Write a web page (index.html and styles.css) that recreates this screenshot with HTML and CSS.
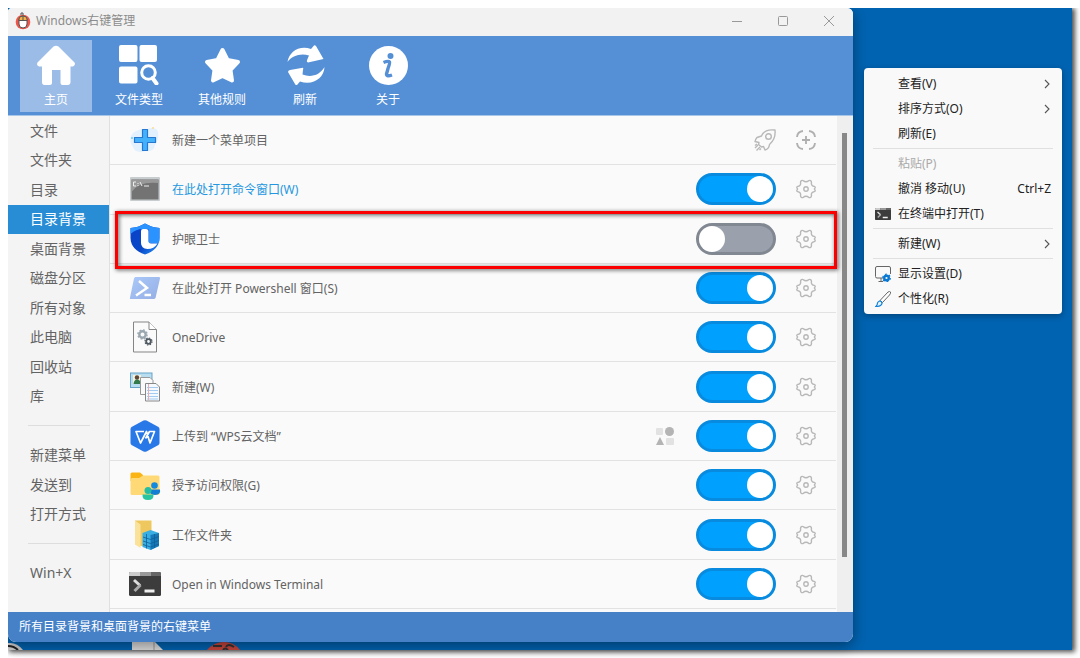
FILE: index.html
```html
<!DOCTYPE html>
<html lang="zh-CN">
<head>
    <meta charset="UTF-8" />
    <meta name="viewport" content="width=device-width, initial-scale=1.0"/>
    <title>Windows右键管理</title>
    <link rel="stylesheet" href="styles.css">
</head>
<body>
    <!-- shared icons -->
    <svg class="defs" aria-hidden="true">
        <symbol id="gear" viewBox="0 0 20 20">
            <path d="M10 2.8Q11.6 2.8 12.6 1.8Q13.4 1 14.6 1.7Q15.7 2.4 15.4 3.8Q15.2 5.7 16.2 6.4Q16.8 7 18 7.3Q19.6 7.8 19 9L18.4 10L19 11Q19.6 12.2 18 12.7Q16.800 13 16.200 13.600Q15.200 14.300 15.400 16.200Q15.700 17.600 14.600 18.300Q13.400 19 12.600 18.200Q11.600 17.200 10 17.200Q8.400 17.200 7.400 18.200Q6.600 19 5.400 18.300Q4.300 17.600 4.600 16.200Q4.800 14.300 3.800 13.600Q3.200 13 2 12.700Q.4 12.200 1 11L1.600 10L1 9Q.4 7.800 2 7.300Q3.200 7 3.800 6.400Q4.800 5.700 4.600 3.800Q4.300 2.400 5.400 1.700Q6.600 1 7.400 1.800Q8.400 2.800 10 2.800Z" fill="none" stroke="#b8b8b8" stroke-width="1.400"/>
            <circle cx="10" cy="10" r="2.200" fill="none" stroke="#b8b8b8" stroke-width="1.400"/>
        </symbol>
        <symbol id="terminal" viewBox="0 0 32 24">
            <rect width="32" height="24" rx="1.500" fill="#3c3c3c"/>
            <path d="M0 4V1.500Q0 0 1.500 0H11V4Z" fill="#ccc"/>
            <path d="M11 0H22V4H11Z" fill="#999"/>
            <path d="M22 0H30.500Q32 0 32 1.500V4H22Z" fill="#666"/>
            <path d="M5 8L11 13.500" stroke="#ddd" stroke-width="3"/>
            <path d="M11.500 13L5.500 19" stroke="#aaa" stroke-width="3"/>
            <path d="M15.500 17.500H25.500V20.500H15.500Z" fill="#eee"/>
        </symbol>
        <symbol id="chevron" viewBox="0 0 8 10">
            <path d="M2 1L6 5L2 9" fill="none" stroke="#555" stroke-width="1.100"/>
        </symbol>
    </svg>

    <div class="desktop">
        <!-- desktop icons peeking out under the window -->
        <svg class="desk-icons" viewBox="0 0 240 8" aria-hidden="true">
            <path d="M0 1Q9 0 15 8H0Z" fill="#ccc"/>
            <path d="M0 4Q6 4 10 8" fill="none" stroke="#222" stroke-width="2"/>
            <path d="M124 0H147L155 8H124Z" fill="#ddd"/>
            <path d="M146 0V8" stroke="#999"/>
            <path d="M199 8Q206 0 216 0Q226 0 232 8Z" fill="#c9453c"/>
            <path d="M205 4H214M218 5Q220 1 226 5M215 8Q217 5 220 8" fill="none" stroke="#333" stroke-width="2"/>
        </svg>

        <main class="window">
            <header class="titlebar">
                <svg width="16" height="18" viewBox="0 0 16 18">
                    <circle cx="8" cy="10" r="7.300" fill="#ef5548"/>
                    <rect x="4" y="4" width="8" height="12" rx="4" fill="#fff" stroke="#555"/>
                    <path d="M4 8.500V7Q4 4 8 4Q12 4 12 7V8.500Z" fill="#f5b143" stroke="#555"/>
                    <path d="M8 8.500V4M6 3V1H8V3" fill="none" stroke="#555"/>
                </svg>
                <h1>Windows右键管理</h1>
                <div class="win-buttons">
                    <button aria-label="最小化"><svg width="12" height="12"><path d="M1 6.500H11" stroke="#999"/></svg></button>
                    <button aria-label="最大化"><svg width="12" height="12"><rect x="1.500" y="1.500" width="9" height="9" rx="1" fill="none" stroke="#999"/></svg></button>
                    <button aria-label="关闭"><svg width="12" height="12"><path d="M1 1L11 11M11 1L1 11" stroke="#999"/></svg></button>
                </div>
            </header>

            <nav class="toolbar">
                <button class="tool active">
                    <svg width="40" height="40" viewBox="0 0 40 40"><path d="M17.500 1.500Q20 -.2 22.500 1.500L38.500 17.500Q40 20 37 21.500H34.500V37Q34.500 40 31.500 40H26.500Q24.500 40 24.500 38V25H16V38Q16 40 14 40H8.500Q6 40 6 37V21.500H3Q0 20.500 1.500 17.500Z" fill="#fff"/></svg>
                    <span>主页</span>
                </button>
                <button class="tool">
                    <svg width="40" height="40" viewBox="0 0 40 40"><path d="M2 0H16.500Q18.500 0 18.500 2V14.500Q18.500 17 16.500 17H2Q0 17 0 15V2Q0 0 2 0ZM22.500 0H36Q38 0 38 2V15Q38 17 36 17H22.500Q20.500 17 20.500 15V2Q20.500 0 22.500 0ZM2 21.500H16.500Q18.500 21.500 18.500 23.500V36.500Q18.500 38.500 16.500 38.500H2Q0 38.500 0 36.500V23.500Q0 21.500 2 21.500Z" fill="#fff"/><circle cx="29.500" cy="27.500" r="6.800" fill="none" stroke="#fff" stroke-width="3"/><path d="M33.500 33L37.500 38.500" stroke="#fff" stroke-width="4" stroke-linecap="round"/></svg>
                    <span>文件类型</span>
                </button>
                <button class="tool">
                    <svg width="40" height="40" viewBox="0 0 40 40"><path d="M20.500 5L25.500 15L36 17L28.500 25L30 35.500L20.500 31L11 35.500L12.500 25L5 17L15.500 15Z" fill="#fff" stroke="#fff" stroke-width="4" stroke-linejoin="round"/></svg>
                    <span>其他规则</span>
                </button>
                <button class="tool">
                    <svg width="40" height="40" viewBox="0 0 40 40"><path d="M2.500 17C4 7 14 0 26 4L29 0.500Q30 0 31 1L38.500 14L23 17.500Q21 17 22.500 14L24 10.500C15 8 7 11 2.500 17Z" fill="#fff"/><path d="M39.500 22C39 33 28 41 15 36.500L12 40Q11 40.500 10 39L3 27Q3 25.500 5 25L16.500 23Q19 22 18 25L17.500 29.500C26 33 35 30 39.500 22Z" fill="#fff"/></svg>
                    <span>刷新</span>
                </button>
                <button class="tool">
                    <svg width="40" height="40" viewBox="0 0 40 40"><circle cx="20.500" cy="20.500" r="19.500" fill="#fff"/><circle cx="22.500" cy="11" r="3" fill="#5590d6"/><path d="M15.500 17.500Q20.500 15.500 21.500 17Q22 18 20 23.500L18.500 29Q18.500 32 24 30" fill="none" stroke="#5590d6" stroke-width="3.400"/></svg>
                    <span>关于</span>
                </button>
            </nav>

            <div class="content">
                <nav class="sidebar">
                    <a href="#">文件</a>
                    <a href="#">文件夹</a>
                    <a href="#">目录</a>
                    <a href="#" class="active">目录背景</a>
                    <a href="#">桌面背景</a>
                    <a href="#">磁盘分区</a>
                    <a href="#">所有对象</a>
                    <a href="#">此电脑</a>
                    <a href="#">回收站</a>
                    <a href="#">库</a>
                    <hr>
                    <a href="#">新建菜单</a>
                    <a href="#">发送到</a>
                    <a href="#">打开方式</a>
                    <hr>
                    <a href="#">Win+X</a>
                </nav>

                <ul class="list">
                    <li class="row">
                        <svg class="icon" viewBox="0 0 32 32"><path d="M4 9Q12 4 18 5Q27 2 29 8Q30 16 26 21Q25 28 17 27Q6 30 4 23Q0 18 2 12Z" fill="#e2f1fd"/><path d="M13.500 5.500H18.500V13.500H26.500V18.500H18.500V26.500H13.500V18.500H5.500V13.500H13.500Z" fill="#44b2fb" stroke="#2878cf" stroke-width="1.200" stroke-linejoin="round"/><circle cx="24" cy="4" r="1" fill="#fbdd90"/><circle cx="3" cy="14" r="1" fill="#6dcaf5"/></svg>
                        <span class="name">新建一个菜单项目</span>
                        <button class="opt" aria-label="快速添加"><svg width="22" height="22" viewBox="0 0 22 22"><g fill="none" stroke="#b8b8b8" stroke-width="1.400" stroke-linejoin="round"><path d="M21 1Q12 0 8.500 5L7.500 7L3 8.500Q1 11 1 12.500L5 13.500L4.500 15.500L7.500 18L9.500 17.500L11 21Q15 20 15.500 15.500Q22 10 21 1Z"/><circle cx="14.500" cy="7.500" r="2.800"/><path d="M4 16L1 19M6 18L2.500 21.500M3 15L1 16.500M7 19.500L5.500 21"/></g></svg></button>
                        <button class="opt" aria-label="添加"><svg width="20" height="20" viewBox="0 0 20 20"><path d="M1 7Q1.500 1.500 7 1M13 1Q18.500 1.500 19 7M19 13Q18.500 18.500 13 19M7 19Q1.500 18.500 1 13M6 10H14M10 6V14" fill="none" stroke="#b0b0b0" stroke-width="1.900"/></svg></button>
                    </li>
                    <li class="row">
                        <svg class="icon" viewBox="0 0 32 32"><rect x="1" y="4" width="30" height="24" rx="1" fill="#c7cccf"/><path d="M2.500 6.500H29.500V26.500H2.500Z" fill="#737373"/><path d="M2.500 6.500H29.500V10Q10 8 2.500 19Z" fill="#999"/><path d="M7 9H4.500V13H7M9 10V11M9 12V13M11 9L13 13M15 13H20" fill="none" stroke="#eee"/></svg>
                        <label class="name link" for="t1">在此处打开命令窗口(W)</label>
                        <input type="checkbox" class="toggle" id="t1" checked>
                        <button class="opt" aria-label="设置"><svg width="20" height="20"><use href="#gear"/></svg></button>
                    </li>
                    <li class="row marked">
                        <svg class="icon" viewBox="0 0 32 32">
                            <defs><linearGradient id="shield" x1="0" y1="0" x2="1" y2="1"><stop offset="0" stop-color="#0a40c8"/><stop offset=".6" stop-color="#0a48c8"/><stop offset="1" stop-color="#2a9cff"/></linearGradient></defs>
                            <path d="M16 .5Q23 4.500 30.500 5V15Q30 27 16 31.500Q2 27 1.500 15V5Q9 4.500 16 .5Z" fill="url(#shield)"/>
                            <path d="M16 .5Q23 4.500 30.500 5V16Q30.500 19.500 29 20H20V8Q20 6 18 6H14Q7 6 1.500 11V5Q9 4.500 16 .5Z" fill="#2a93ff"/>
                            <path d="M14 6H17Q19.500 6 19.500 8.500V18.500Q19.500 20.500 22 20.500H28.500Q25 26 18.500 26Q12 25.500 12 20V8Q12 6 14 6Z" fill="#fff"/>
                        </svg>
                        <label class="name" for="t2">护眼卫士</label>
                        <input type="checkbox" class="toggle" id="t2">
                        <button class="opt" aria-label="设置"><svg width="20" height="20"><use href="#gear"/></svg></button>
                    </li>
                    <li class="row">
                        <svg class="icon" viewBox="0 0 32 32"><defs><linearGradient id="ps" x1="0" y1="0" x2="1" y2="1"><stop offset="0" stop-color="#abc9fb"/><stop offset="1" stop-color="#94aee3"/></linearGradient></defs><path d="M6.500 5H30Q31.500 5 31 6.500L26.500 26Q26 27 24.500 27H1.500Q.5 27 1 25.500L5 6.500Q5.500 5 6.500 5Z" fill="url(#ps)"/><path d="M10 9L18 16L7 23.500M15.500 23H22" fill="none" stroke="#fff" stroke-width="2.500"/></svg>
                        <label class="name" for="t3">在此处打开 Powershell 窗口(S)</label>
                        <input type="checkbox" class="toggle" id="t3" checked>
                        <button class="opt" aria-label="设置"><svg width="20" height="20"><use href="#gear"/></svg></button>
                    </li>
                    <li class="row">
                        <svg class="icon" viewBox="0 0 32 32"><path d="M4.500 1H20L27.500 8.500V31H4.500Z" fill="#fafafa" stroke="#858585"/><path d="M20 1V8.500H27.500" fill="#fff" stroke="#858585"/><circle cx="13.500" cy="13.500" r="3.200" fill="none" stroke="#9aa7b1" stroke-width="2.400"/><circle cx="13.500" cy="13.500" r="4.600" fill="none" stroke="#9aa7b1" stroke-width="1.400" stroke-dasharray="1.800 1.810"/><circle cx="19.500" cy="20.500" r="2.300" fill="none" stroke="#505a62" stroke-width="1.800"/><circle cx="19.500" cy="20.500" r="3.500" fill="none" stroke="#505a62" stroke-width="1.200" stroke-dasharray="1.400 1.350"/></svg>
                        <label class="name" for="t4">OneDrive</label>
                        <input type="checkbox" class="toggle" id="t4" checked>
                        <button class="opt" aria-label="设置"><svg width="20" height="20"><use href="#gear"/></svg></button>
                    </li>
                    <li class="row">
                        <svg class="icon" viewBox="0 0 32 32"><rect x="1.500" y="2" width="21.500" height="14.500" fill="#b9ddf0" stroke="#66a4c8"/><rect x="4" y="4" width="8" height="9" fill="#f5f2dc"/><circle cx="8" cy="6.500" r="2.200" fill="#5e4637"/><path d="M4.500 13Q5 8.500 8 8.500Q11.500 8.500 12 13Z" fill="#327a4b"/><path d="M11.500 6.500H21L24 9.500V23.500H11.500Z" fill="#fafafa" stroke="#999"/><path d="M16.500 12.500H27L30.500 16V30H16.500Z" fill="#f5faff" stroke="#888"/><path d="M18 16.500H29M18 19.500H29M18 22.500H29M18 25.500H29M18 28H29" stroke="#a5cbee"/><path d="M19.500 13V29.500" stroke="#efabb2"/></svg>
                        <label class="name" for="t5">新建(W)</label>
                        <input type="checkbox" class="toggle" id="t5" checked>
                        <button class="opt" aria-label="设置"><svg width="20" height="20"><use href="#gear"/></svg></button>
                    </li>
                    <li class="row">
                        <svg class="icon" viewBox="0 0 32 32"><path d="M14.500 .5Q16 -.2 17.500 .5L29.500 7Q30.500 8 30.500 9V23Q30.500 24 29.500 25L17.500 31.500Q16 32.200 14.500 31.500L2.500 25Q1.500 24 1.500 23V9Q1.500 8 2.500 7Z" fill="#2878e8"/><path d="M15 11.500H7L11.500 23L17.500 11.500L21 23L25.500 11.500H20.500L16.500 18.500" fill="none" stroke="#fff" stroke-width="1.700" stroke-linejoin="round"/></svg>
                        <label class="name" for="t6">上传到 “WPS云文档”</label>
                        <svg class="shapes" width="18" height="18"><rect y="1" width="7" height="7" rx="1" fill="#e2e2e2"/><circle cx="13.500" cy="4.500" r="4.500" fill="#b4b4b4"/><path d="M4 10L8 18H0Z" fill="#b4b4b4"/><rect x="10" y="11" width="8" height="7" rx="1" fill="#e2e2e2"/></svg>
                        <input type="checkbox" class="toggle" id="t6" checked>
                        <button class="opt" aria-label="设置"><svg width="20" height="20"><use href="#gear"/></svg></button>
                    </li>
                    <li class="row">
                        <svg class="icon" viewBox="0 0 32 32"><path d="M1.500 5Q1.500 3.500 3 3.500H11L14 6V12H1.500Z" fill="#fab514"/><path d="M3 9H10L14 6.500H29Q30.500 6.500 30.500 8V24Q30.500 26 29 26H3Q1.500 26 1.500 24.500V10Z" fill="#fed975"/><circle cx="25.500" cy="16.500" r="3.300" fill="#128ae0"/><path d="M20 20.500H31Q32 25.500 26 26Q20 25.500 20 20.500Z" fill="#147ed5"/><circle cx="19" cy="21.500" r="3.500" fill="#23bda3"/><path d="M13.500 25.500H24.500Q25 31 19 31Q13 31 13.500 25.500Z" fill="#28c5a0"/></svg>
                        <label class="name" for="t7">授予访问权限(G)</label>
                        <input type="checkbox" class="toggle" id="t7" checked>
                        <button class="opt" aria-label="设置"><svg width="20" height="20"><use href="#gear"/></svg></button>
                    </li>
                    <li class="row">
                        <svg class="icon" viewBox="0 0 32 32"><path d="M6 1.500H22.500V27H12L6 25Z" fill="#eec75f"/><path d="M6 1.500L11.500 5.500V29L6 25.500Z" fill="#fbe29a"/><path d="M13.500 14L21.500 11L30 14V27L21.500 31L13.500 28Z" fill="#38aee2"/><path d="M21.500 16L30 14V27L21.500 31Z" fill="#1679b7"/><path d="M14 18L21.500 20.500L30 17.500M14 22L21.500 24.500L30 21.500M14 25.500L21.500 28L30 25M17.500 15V29.500M25.500 15V29" fill="none" stroke="#105f98" stroke-width=".8"/></svg>
                        <label class="name" for="t8">工作文件夹</label>
                        <input type="checkbox" class="toggle" id="t8" checked>
                        <button class="opt" aria-label="设置"><svg width="20" height="20"><use href="#gear"/></svg></button>
                    </li>
                    <li class="row">
                        <svg class="icon"><use href="#terminal"/></svg>
                        <label class="name" for="t9">Open in Windows Terminal</label>
                        <input type="checkbox" class="toggle" id="t9" checked>
                        <button class="opt" aria-label="设置"><svg width="20" height="20"><use href="#gear"/></svg></button>
                    </li>
                </ul>

                <div class="scrollbar"><div class="thumb"></div></div>
            </div>

            <footer class="status">所有目录背景和桌面背景的右键菜单</footer>
        </main>

        <div class="menu">
            <button class="item"><span>查看(V)</span><svg class="arrow"><use href="#chevron"/></svg></button>
            <button class="item"><span>排序方式(O)</span><svg class="arrow"><use href="#chevron"/></svg></button>
            <button class="item"><span>刷新(E)</span></button>
            <hr>
            <button class="item" disabled><span>粘贴(P)</span></button>
            <button class="item"><span>撤消 移动(U)</span><kbd>Ctrl+Z</kbd></button>
            <button class="item"><svg class="menu-icon"><use href="#terminal"/></svg><span>在终端中打开(T)</span></button>
            <hr>
            <button class="item"><span>新建(W)</span><svg class="arrow"><use href="#chevron"/></svg></button>
            <hr>
            <button class="item"><svg class="menu-icon" viewBox="0 0 16 16"><path d="M8 12H2Q.5 12 .5 10.500V2Q.5 .5 2 .5H14Q15.500 .5 15.500 2V8M6 12V15M3.500 15.500H8" fill="none" stroke="#666"/><circle cx="11.500" cy="12" r="2.300" fill="none" stroke="#0878d4" stroke-width="2.400"/><circle cx="11.500" cy="12" r="3.800" fill="none" stroke="#0878d4" stroke-width="1.200" stroke-dasharray="1.800 2.180"/></svg><span>显示设置(D)</span></button>
            <button class="item"><svg class="menu-icon" viewBox="0 0 16 16"><path d="M5 9.500L13 1Q15 0 15.500 1Q16 2 14.500 4L7.500 11.500Z" fill="#fff" stroke="#666"/><path d="M4.500 10Q7 10 7 12.500Q6 15.500 .8 15.500Q2.500 14.500 2.500 12Q3 10.500 4.500 10Z" fill="#e5f3ff" stroke="#1683d8" stroke-width="1.200"/></svg><span>个性化(R)</span></button>
        </div>
    </div>
</body>
</html>
```
FILE: styles.css
```css
* {
    box-sizing: border-box;
}

body {
    margin: 0;
    padding: 8px;
    min-height: 100vh;
    display: flex;
    background-color: #fff;
    font-family: "Noto Sans", "Noto Sans CJK SC", sans-serif;
    font-size: 12px;
    line-height: 16px;
    color: #636363;
}

button {
    background: none;
    border: none;
    padding: 0;
    margin: 0;
    font: inherit;
    color: inherit;
    cursor: pointer;
}

svg {
    display: block;
    flex: none;
}

.defs {
    position: absolute;
    width: 0;
    height: 0;
}

.desktop {
    position: relative;
    flex: 1;
    display: flex;
    align-items: flex-start;
    gap: 11px;
    padding: 0 10px 8px 0;
    background-color: #0063b1;
    box-shadow: 2px 1px 5px 1px rgba(0, 0, 0, 0.7);
    clip-path: inset(0 -8px -8px 0);
}

.desk-icons {
    position: absolute;
    left: 0;
    bottom: 0;
    width: 240px;
    height: 8px;
}

/* main window */
.window {
    position: relative;
    flex: 1;
    align-self: stretch;
    display: flex;
    flex-direction: column;
    border-radius: 4px 6px 8px 8px;
    overflow: hidden;
    background-color: #fafafa;
    box-shadow: 0 4px 14px rgba(0, 0, 0, 0.4);
}

.titlebar {
    display: flex;
    align-items: center;
    height: 28px;
    padding: 0 8px 2px 7px;
    gap: 5px;
    background-color: #f2f2f2;
}

.titlebar h1 {
    flex: 1;
    margin: 0;
    font-size: 12px;
    font-weight: normal;
    color: #8c8c8c;
}

.win-buttons {
    display: flex;
    gap: 14px;
}

.win-buttons button {
    width: 32px;
    height: 24px;
    display: grid;
    place-items: center;
}

.toolbar {
    display: flex;
    gap: 11px;
    padding: 4px 12px 3px;
    background-color: #5590d6;
    border-bottom: 1px solid #a8c6ea;
}

.tool {
    display: flex;
    flex-direction: column;
    align-items: center;
    gap: 7px;
    width: 72px;
    height: 72px;
    padding-top: 5px;
    color: #fff;
}

.tool.active {
    background-color: #9bbce7;
}

.content {
    flex: 1;
    display: flex;
}

.sidebar {
    width: 102px;
    display: grid;
    grid-auto-rows: 1fr;
    padding: 0 0 24px;
    background-color: #f4f4f4;
    border-right: 1px solid #e0e0e0;
}

.sidebar a {
    display: flex;
    align-items: center;
    padding-left: 22px;
    font-size: 14px;
    color: #636363;
    text-decoration: none;
}

.sidebar a.active {
    background-color: #288dd5;
    color: #fff;
}

.sidebar hr {
    align-self: center;
    width: 62px;
    margin: 0 0 0 20px;
    border: none;
    border-top: 1px solid #ddd;
}

.list {
    flex: 1;
    display: grid;
    grid-auto-rows: 1fr;
    margin: 0;
    padding: 0 1px 3px 0;
    list-style: none;
}

.row {
    position: relative;
    display: flex;
    align-items: center;
    padding: 0 20px 0 19px;
    border-bottom: 1px solid #e2e2e2;
}

/* red frame around the highlighted entry */
.row.marked::after {
    content: "";
    position: absolute;
    top: -4px;
    right: -1px;
    bottom: -6px;
    left: 5px;
    border: 3px solid #fa0000;
    filter: drop-shadow(1px 1px 2px rgba(0, 0, 0, 0.7));
    pointer-events: none;
    z-index: 1;
}

.icon {
    width: 32px;
    height: 32px;
}

.name {
    flex: 1;
    margin-left: 11px;
    padding-top: 2px;
}

.name.link {
    color: #2497e0;
}

.toggle {
    appearance: none;
    display: flex;
    align-items: center;
    width: 80px;
    height: 32px;
    margin: 0;
    padding: 0;
    border: 3px solid #818892;
    border-radius: 16px;
    background-color: #9aa1ad;
    cursor: pointer;
}

.toggle::before {
    content: "";
    width: 26px;
    height: 26px;
    border-radius: 50%;
    background-color: #fff;
}

.toggle:checked {
    justify-content: flex-end;
    border-color: #088bdf;
    background-color: #00a0ff;
}

.opt {
    margin-left: 20px;
}

.shapes {
    margin-right: 22px;
}

.scrollbar {
    width: 16px;
    padding: 17px 6px 55px 5px;
    background-color: #efefef;
}

.thumb {
    height: 100%;
    background-color: #888;
}

.status {
    padding: 7px 11px;
    background-color: #4681c7;
    color: #fff;
}

/* desktop context menu */
.menu {
    position: relative;
    width: 198px;
    margin-top: 60px;
    padding: 3px 9px;
    border-radius: 4px;
    background-color: #f9f9f9;
    box-shadow: 0 2px 6px rgba(0, 0, 0, 0.3);
    color: #222;
}

.menu hr {
    margin: 2px 0;
    border: none;
    border-top: 1px solid #e0e0e0;
}

.item {
    display: grid;
    grid-template-columns: 23px 1fr auto;
    align-items: center;
    width: 100%;
    height: 25px;
    padding: 0 2px;
    text-align: left;
}

.item span {
    grid-column: 2;
}

.item:disabled {
    color: #aaa;
}

.item kbd {
    font: inherit;
}

.arrow {
    width: 8px;
    height: 10px;
}

.menu-icon {
    width: 16px;
    height: 16px;
}
```
